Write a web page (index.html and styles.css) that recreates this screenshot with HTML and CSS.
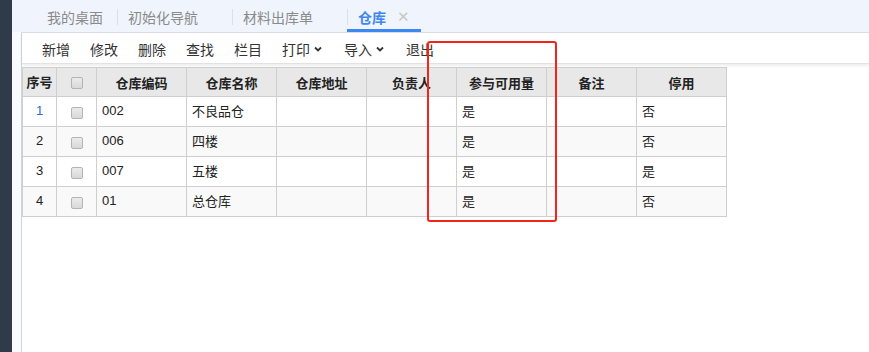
FILE: index.html
```html
<!DOCTYPE html>
<html lang="zh-CN">
<head>
    <meta charset="UTF-8">
    <title>仓库</title>
    <link rel="stylesheet" href="styles.css">
</head>
<body>
    <div class="sidebar"></div>

    <div class="main">
        <div class="tabs">
            <div class="tab tab-first">我的桌面</div>
            <div class="tab tab-wide">初始化导航</div>
            <div class="tab tab-wide">材料出库单</div>
            <div class="tab active">仓库<span class="close">✕</span></div>
        </div>

        <div class="panel">
            <div class="toolbar">
                <span class="btn">新增</span>
                <span class="btn">修改</span>
                <span class="btn">删除</span>
                <span class="btn">查找</span>
                <span class="btn">栏目</span>
                <span class="btn">打印<svg class="chev" viewBox="0 0 8 6"><path d="M1 1.5 L4 4.5 L7 1.5" /></svg></span>
                <span class="btn">导入<svg class="chev" viewBox="0 0 8 6"><path d="M1 1.5 L4 4.5 L7 1.5" /></svg></span>
                <span class="btn">退出</span>
            </div>

            <table class="grid">
                <thead>
                    <tr>
                        <th class="col-no">序号</th>
                        <th class="col-chk"><span class="chk"></span></th>
                        <th>仓库编码</th>
                        <th>仓库名称</th>
                        <th>仓库地址</th>
                        <th>负责人</th>
                        <th>参与可用量</th>
                        <th>备注</th>
                        <th>停用</th>
                    </tr>
                </thead>
                <tbody>
                    <tr>
                        <td class="col-no first">1</td>
                        <td class="col-chk"><span class="chk"></span></td>
                        <td>002</td>
                        <td>不良品仓</td>
                        <td></td>
                        <td></td>
                        <td>是</td>
                        <td></td>
                        <td>否</td>
                    </tr>
                    <tr>
                        <td class="col-no">2</td>
                        <td class="col-chk"><span class="chk"></span></td>
                        <td>006</td>
                        <td>四楼</td>
                        <td></td>
                        <td></td>
                        <td>是</td>
                        <td></td>
                        <td>否</td>
                    </tr>
                    <tr>
                        <td class="col-no">3</td>
                        <td class="col-chk"><span class="chk"></span></td>
                        <td>007</td>
                        <td>五楼</td>
                        <td></td>
                        <td></td>
                        <td>是</td>
                        <td></td>
                        <td>是</td>
                    </tr>
                    <tr>
                        <td class="col-no">4</td>
                        <td class="col-chk"><span class="chk"></span></td>
                        <td>01</td>
                        <td>总仓库</td>
                        <td></td>
                        <td></td>
                        <td>是</td>
                        <td></td>
                        <td>否</td>
                    </tr>
                </tbody>
            </table>
        </div>
    </div>

    <!-- 标注框 -->
    <div class="mark"></div>
</body>
</html>
```

FILE: styles.css
```css
body {
    margin: 0;
    height: 352px;
    display: flex;
    overflow: hidden;
    font-family: "Liberation Sans", "Noto Sans CJK SC", sans-serif;
    color: #333;
    background-color: #fff;
}

.sidebar {
    width: 12px;
    flex-shrink: 0;
    background-color: #303b49;
}

.main {
    flex: 1;
    display: flex;
    flex-direction: column;
    background-color: #f8fafd;
}

/* 顶部标签 */
.tabs {
    height: 32px;
    display: flex;
    padding-left: 24px;
    background-color: #f0f5fd;
}

.tab {
    box-sizing: border-box;
    height: 32px;
    display: flex;
    align-items: center;
    padding-top: 4px;
    padding-left: 11px;
    border-bottom: 3px solid transparent;
    font-size: 14px;
    color: #8a8a8a;
}

.tab + .tab {
    padding-left: 0;
}

.tab + .tab::before {
    content: "";
    width: 1px;
    height: 16px;
    margin-right: 10px;
    background-color: #dcdfe4;
}

.tab-first {
    width: 81px;
}

.tab-wide {
    width: 115px;
}

.tab.active {
    width: 74px;
    color: #3f86f2;
    font-weight: bold;
    border-bottom-color: #3b88f5;
}

.close {
    margin-left: 11px;
    font-size: 15px;
    font-weight: normal;
    color: #c8c8c8;
}

/* 内容面板 */
.panel {
    flex: 1;
    margin-left: 9px;
    background-color: #fff;
    border-top: 1px solid #d9dce1;
    border-left: 1px solid #d4d4d4;
}

.toolbar {
    height: 30px;
    display: flex;
    align-items: center;
    padding-left: 10px;
    border-bottom: 1px solid #e2e2e2;
    box-shadow: 0 2px 3px rgba(0, 0, 0, 0.07);
    font-size: 14px;
}

.btn {
    display: flex;
    align-items: center;
    padding: 1px 10px 0;
    color: #333;
}

.chev {
    width: 8px;
    height: 6px;
    margin-left: 4px;
    margin-right: 2px;
    fill: none;
    stroke: #333;
    stroke-width: 1.8;
}

/* 表格 */
.grid {
    margin-top: 3px;
    border-collapse: separate;
    border-spacing: 0;
    border-top: 1px solid #cfcfcf;
    border-left: 1px solid #cfcfcf;
    font-size: 13px;
}

.grid th,
.grid td {
    box-sizing: border-box;
    border-right: 1px solid #cfcfcf;
    border-bottom: 1px solid #cfcfcf;
    text-align: left;
}

.grid th {
    width: 90px;
    height: 29px;
    padding: 0;
    text-align: center;
    font-weight: bold;
    color: #222;
    background-color: #e8e8e8;
}

.grid td {
    width: 90px;
    height: 30px;
    padding: 0 0 2px 5px;
    color: #222;
}

.grid tbody tr:nth-child(even) td {
    background-color: #f9f9f9;
}

.grid .col-no {
    width: 34px;
    padding: 0 0 2px;
    text-align: center;
}

.grid .col-chk {
    width: 40px;
    padding: 0;
    text-align: center;
}

.grid td.first {
    color: #2b6cc4;
}

.chk {
    display: inline-block;
    box-sizing: border-box;
    width: 12px;
    height: 12px;
    vertical-align: middle;
    border: 1px solid #b4b4b4;
    border-radius: 2px;
    background: linear-gradient(#ebebeb, #d8d8d8);
}

.mark {
    position: absolute;
    left: 427px;
    top: 41px;
    width: 126px;
    height: 177px;
    border: 2px solid #f2241c;
    border-radius: 3px;
}
```
